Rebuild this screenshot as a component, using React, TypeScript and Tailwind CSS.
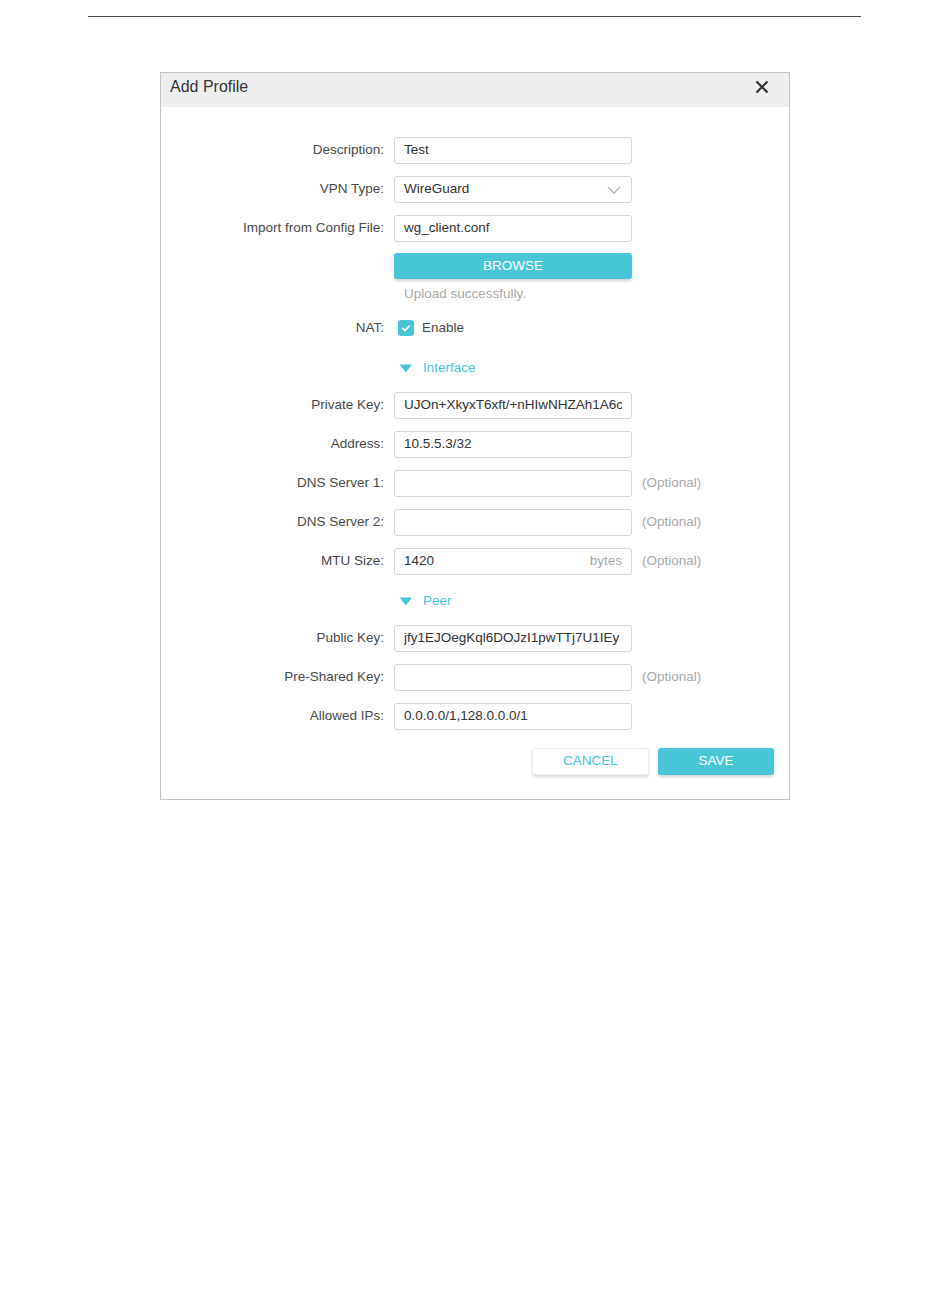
import React from 'react';

type Field = {
  label: string;
  value?: string;
  optional?: boolean;
  suffix?: string;
  mt: string;
};

const teal = 'bg-[#48c6d8]';

function Label({ children }: { children: React.ReactNode }) {
  return <div className="w-[233px] shrink-0 pr-[10px] text-right text-[13.5px] text-[#4a4a4a]">{children}</div>;
}

function InputRow({ f }: { f: Field }) {
  return (
    <div className={`flex h-[27px] items-center ${f.mt}`}>
      <Label>{f.label}</Label>
      <div className="flex h-[27px] w-[238px] shrink-0 items-center overflow-hidden rounded-[3px] border border-[#d6d6d6] bg-white pl-[9px] pr-[9px]">
        <span className="flex-1 overflow-hidden whitespace-nowrap text-[13.5px] text-[#333]">{f.value}</span>
        {f.suffix && <span className="text-[13.5px] text-[#a8a8a8]">{f.suffix}</span>}
      </div>
      {f.optional && <span className="ml-[10px] text-[13.5px] text-[#a8a8a8]">(Optional)</span>}
    </div>
  );
}

function Section({ title, mt }: { title: string; mt: string }) {
  return (
    <div className={`flex h-[20px] items-center ${mt}`}>
      <div className="w-[233px] shrink-0" />
      <svg width="14" height="9" viewBox="0 0 14 9" className="ml-[5px]">
        <path d="M0.5 0.5 H13 L6.75 8.5 Z" fill="#48c6d8" />
      </svg>
      <span className="ml-[10px] text-[13.5px] text-[#48c6d8]">{title}</span>
    </div>
  );
}

const interfaceFields: Field[] = [
  { label: 'Private Key:', value: 'UJOn+XkyxT6xft/+nHIwNHZAh1A6c', mt: 'mt-[14px]' },
  { label: 'Address:', value: '10.5.5.3/32', mt: 'mt-[12px]' },
  { label: 'DNS Server 1:', optional: true, mt: 'mt-[12px]' },
  { label: 'DNS Server 2:', optional: true, mt: 'mt-[12px]' },
  { label: 'MTU Size:', value: '1420', suffix: 'bytes', optional: true, mt: 'mt-[12px]' },
];

const peerFields: Field[] = [
  { label: 'Public Key:', value: 'jfy1EJOegKql6DOJzI1pwTTj7U1IEy', mt: 'mt-[14px]' },
  { label: 'Pre-Shared Key:', optional: true, mt: 'mt-[12px]' },
  { label: 'Allowed IPs:', value: '0.0.0.0/1,128.0.0.0/1', mt: 'mt-[12px]' },
];

export default function App() {
  return (
    <div className="h-[1297px] w-[950px] bg-white pt-[16px] font-['Liberation_Sans',Arial,sans-serif]">
      <div className="ml-[88px] h-px w-[773px] bg-[#4a4a4a]" />

      <div className="ml-[160px] mt-[55px] w-[630px] border border-[#c4c4c4] bg-white">
        <div className="flex h-[34px] items-center justify-between bg-[#eeeeee] pb-[6px] pl-[9px] pr-[20px]">
          <span className="text-[16px] text-[#333]">Add Profile</span>
          <svg width="14" height="14" viewBox="0 0 14 14">
            <path d="M1.5 1.5 L12.5 12.5 M12.5 1.5 L1.5 12.5" stroke="#333" strokeWidth="2.2" />
          </svg>
        </div>

        <div className="flex flex-col pb-[24px] pt-[30px]">
          <InputRow f={{ label: 'Description:', value: 'Test', mt: '' }} />

          <div className="mt-[12px] flex h-[27px] items-center">
            <Label>VPN Type:</Label>
            <div className="flex h-[27px] w-[238px] items-center justify-between rounded-[3px] border border-[#d6d6d6] pl-[9px] pr-[10px]">
              <span className="text-[13.5px] text-[#333]">WireGuard</span>
              <svg width="14" height="8" viewBox="0 0 14 8">
                <path d="M1 1 L7 7 L13 1" fill="none" stroke="#b5b5b5" strokeWidth="1.4" />
              </svg>
            </div>
          </div>

          <InputRow f={{ label: 'Import from Config File:', value: 'wg_client.conf', mt: 'mt-[12px]' }} />

          <div className="mt-[11px] flex">
            <div className="w-[233px] shrink-0" />
            <button className={`h-[26px] w-[238px] rounded-[3px] ${teal} text-[13.5px] text-white shadow-[0_2px_3px_rgba(0,0,0,0.18)]`}>
              BROWSE
            </button>
          </div>

          <div className="mt-[5px] flex h-[20px] items-center">
            <div className="w-[233px] shrink-0" />
            <span className="pl-[10px] text-[13.5px] text-[#a8a8a8]">Upload successfully.</span>
          </div>

          <div className="mt-[14px] flex h-[20px] items-center">
            <Label>NAT:</Label>
            <span className={`ml-[4px] flex h-[16px] w-[16px] items-center justify-center rounded-[3px] ${teal}`}>
              <svg width="10" height="8" viewBox="0 0 10 8">
                <path d="M1.3 4 L4 6.5 L8.8 1.5" fill="none" stroke="#fff" strokeWidth="1.7" />
              </svg>
            </span>
            <span className="ml-[8px] text-[13.5px] text-[#4a4a4a]">Enable</span>
          </div>

          <Section title="Interface" mt="mt-[20px]" />
          {interfaceFields.map((f) => (
            <InputRow key={f.label} f={f} />
          ))}

          <Section title="Peer" mt="mt-[16px]" />
          {peerFields.map((f) => (
            <InputRow key={f.label} f={f} />
          ))}

          <div className="mt-[18px] flex justify-end gap-[9px] pr-[15px]">
            <button className="h-[27px] w-[117px] rounded-[3px] border border-[#ececec] bg-white text-[13.5px] text-[#48c6d8] shadow-[0_2px_3px_rgba(0,0,0,0.15)]">
              CANCEL
            </button>
            <button className={`h-[27px] w-[116px] rounded-[3px] ${teal} text-[13.5px] text-white shadow-[0_2px_3px_rgba(0,0,0,0.18)]`}>
              SAVE
            </button>
          </div>
        </div>
      </div>
    </div>
  );
}
